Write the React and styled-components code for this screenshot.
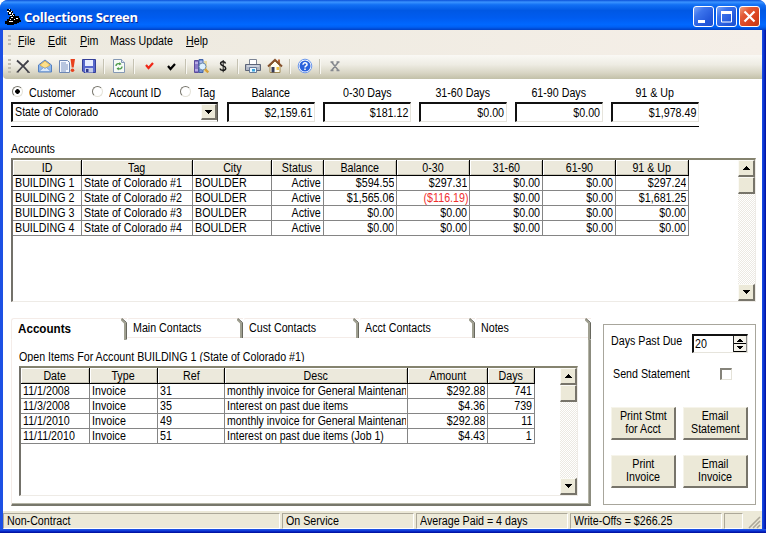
import styled, { createGlobalStyle } from "styled-components";

const GlobalStyle = createGlobalStyle`
  * {
    box-sizing: border-box;
  }
  body {
    margin: 0;
    background: #fff;
    overflow: hidden;
  }
`;

const Window = styled.div`
  width: 766px;
  height: 533px;
  display: flex;
  flex-direction: column;
  overflow: hidden;
  border-radius: 8px 8px 0 0;
  background: linear-gradient(180deg, #1c50e4 0 530px, #0a2fd0 531px, #000c96 533px);
  font-family: "Liberation Sans", Arial, sans-serif;
  font-size: 12px;
  line-height: 14px;
  color: #000;
`;

const TitleBar = styled.div`
  height: 30px;
  flex: none;
  display: flex;
  align-items: center;
  padding: 3px 6px 0 5px;
  background: linear-gradient(
    180deg,
    #0a50d8 0%,
    #3a93ff 7%,
    #1270f4 16%,
    #0058e4 35%,
    #005cf0 60%,
    #0068ff 82%,
    #0060f4 90%,
    #0040c4 100%
  );
`;

const Title = styled.div`
  flex: 1;
  margin-left: 3px;
  font-family: "Open Sans", "Noto Sans", sans-serif;
  font-weight: 700;
  font-size: 13px;
  line-height: 18px;
  letter-spacing: -0.25px;
  color: #fff;
  text-shadow: 1px 1px 0 #0a2a9c;
`;

const Controls = styled.div`
  display: flex;
  gap: 2px;
`;

const ControlButton = styled.div`
  width: 21px;
  height: 21px;
  border: 1px solid #fff;
  border-radius: 3px;
  background: ${(p) =>
    p.$close
      ? "linear-gradient(135deg, #f0a080 0%, #e35a35 30%, #d8401c 70%, #c03a18 100%)"
      : "linear-gradient(135deg, #7ea6f8 0%, #3c74ec 30%, #2459dc 70%, #1c50d0 100%)"};
  svg {
    display: block;
  }
`;

const Frame = styled.div`
  flex: 1;
  display: flex;
  min-height: 0;
  margin-bottom: 4px;
  background: linear-gradient(90deg, #1c50e4 762px, #1040dc 763px, #0010a0 766px);
`;

const Body = styled.div`
  flex: 1;
  margin: 0 4px 0 3px;
  display: flex;
  flex-direction: column;
  background: #fff;
  min-height: 0;
`;

const MenuBar = styled.div`
  height: 25px;
  flex: none;
  display: flex;
  align-items: center;
  padding: 0 0 3px 5px;
  background: linear-gradient(90deg, #ece9de, #f5efe8);
`;

const MenuItem = styled.div`
  width: ${(p) => p.$w}px;
  white-space: nowrap;
`;

const Grip = styled.div`
  width: 3px;
  height: ${(p) => p.$h}px;
  margin-right: ${(p) => p.$gap}px;
  background: repeating-linear-gradient(180deg, #c0bdb0 0 2px, transparent 2px 4px);
`;

const ToolBar = styled.div`
  height: 24px;
  flex: none;
  display: flex;
  align-items: center;
  padding: 0 0 2px 5px;
  border-radius: 4px 0 0 4px;
  background: linear-gradient(180deg, #faf9f5 0%, #eeece3 40%, #d8d5c4 75%, #c2c0a8 100%);
  svg {
    display: block;
    margin-right: 6px;
  }
`;

const Separator = styled.div`
  width: 2px;
  height: 15px;
  margin: 0 6px 0 0;
  background: #c5c2b2;
  border-right: 1px solid #f8f7f2;
`;

/* the narrow dialog face: 12px letters pulled in sideways */
const Text = styled.span`
  display: inline-block;
  flex: none;
  white-space: pre;
  transform: scaleX(${(p) => p.$scale || 0.89});
  transform-origin: ${(p) => p.$origin || "left"} center;
  font-weight: ${(p) => (p.$bold ? 700 : 400)};
  color: ${(p) => p.$color || "inherit"};
  &::first-letter {
    text-decoration: ${(p) => (p.$underline ? "underline" : "none")};
  }
`;

const Content = styled.div`
  flex: 1;
  padding-left: 8px;
  display: flex;
  flex-direction: column;
  min-height: 0;
`;

const Summary = styled.div`
  width: 688px;
  height: 48px;
  flex: none;
  display: flex;
  gap: 8px;
  border-bottom: 1px solid #000;
`;

const Field = styled.div`
  width: ${(p) => p.$w || 88}px;
  margin-right: ${(p) => p.$mr || 0}px;
`;

const FieldLabel = styled.div`
  height: 23px;
  display: flex;
  align-items: center;
  justify-content: center;
  padding-top: 5px;
`;

const RadioRow = styled.div`
  height: 23px;
  display: flex;
  align-items: center;
  padding-top: 5px;
`;

const Radio = styled.div`
  width: 11px;
  height: 11px;
  margin: -3px ${(p) => p.$gap}px 0 1px;
  border-radius: 50%;
  border: 1px solid;
  border-color: #77756c #e4e2d8 #e4e2d8 #77756c;
  background: ${(p) =>
    p.$on ? "radial-gradient(circle, #000 0 2px, #fff 2.6px)" : "#fff"};
`;

const RadioLabel = styled.div`
  width: ${(p) => p.$w}px;
`;

const Sunken = styled.div`
  height: 20px;
  display: flex;
  align-items: center;
  justify-content: ${(p) => (p.$left ? "flex-start" : "flex-end")};
  padding: ${(p) => (p.$left ? "0 0 1px 2px" : "1px 2px 0 0")};
  border-style: solid;
  border-width: 2px 1px 1px 2px;
  border-color: #111 #e6e4dc #e6e4dc #111;
  background: #fff;
`;

const Combo = styled(Sunken)`
  border-right-color: #55534c;
`;

const Spacer = styled.div`
  flex: 1;
  min-width: 0;
`;

const ArrowButton = styled.div`
  width: ${(p) => p.$w || 17}px;
  height: ${(p) => p.$h || 17}px;
  flex: none;
  display: flex;
  align-items: center;
  justify-content: center;
  background: #ece9d8;
  border-style: solid;
  border-width: 1px 2px 2px 1px;
  border-color: #fbfaf5 #77746a #77746a #fbfaf5;
`;

const SectionLabel = styled.div`
  height: 31px;
  flex: none;
  padding-top: 15px;
`;

const GridBox = styled.div`
  width: ${(p) => p.$w}px;
  height: ${(p) => p.$h}px;
  flex: none;
  display: flex;
  justify-content: space-between;
  border-style: solid;
  border-width: 2px 1px 1px 2px;
  border-color: #85836f #eeebe6 #eeebe6 #73716a;
  background: #fff;
`;

const Rows = styled.div`
  display: flex;
  flex-direction: column;
`;

const Row = styled.div`
  display: flex;
`;

const HeadCell = styled.div`
  width: ${(p) => p.$w}px;
  height: 16px;
  display: flex;
  align-items: center;
  justify-content: center;
  padding-top: 1px;
  background: #ece9dc;
  border-right: 1px solid #000;
  border-bottom: 1px solid #000;
  box-shadow: inset 1px 1px 0 #fff, inset -1px -1px 0 #c8c5b6;
`;

const Cell = styled.div`
  width: ${(p) => p.$w}px;
  height: 15px;
  display: flex;
  align-items: center;
  justify-content: ${(p) => (p.$right ? "flex-end" : "flex-start")};
  padding: 0 ${(p) => p.$pr}px 0 2px;
  overflow: clip;
  overflow-clip-margin: content-box;
  border-right: 1px solid #858585;
  border-bottom: 1px solid #858585;
`;

const ScrollBar = styled.div`
  width: 17px;
  display: flex;
  flex-direction: column;
  background: repeating-conic-gradient(#ece9e2 0 25%, #fff 0 50%) 0 0 / 2px 2px;
`;

const Lower = styled.div`
  display: flex;
  margin-top: 16px;
  height: 188px;
`;

const TabPanel = styled.div`
  width: 580px;
  margin-right: 12px;
  display: flex;
  flex-direction: column;
`;

const TabStrip = styled.div`
  display: flex;
  height: 22px;
`;

const Tab = styled.div`
  width: 116px;
  height: ${(p) => (p.$active ? 22 : 20)}px;
  flex: none;
  display: flex;
  justify-content: space-between;
  padding-left: ${(p) => (p.$active ? 6 : 5)}px;
  padding-top: ${(p) => (p.$active ? 3 : 2)}px;
  border-top: 1px solid #f4ece8;
  border-left: 1px solid ${(p) => (p.$active ? "#f4ece8" : "transparent")};
  border-bottom: 1px solid ${(p) => (p.$active ? "transparent" : "#f4ece8")};
  border-radius: 3px 0 0 0;
  svg {
    flex: none;
    margin-top: ${(p) => (p.$active ? -4 : -3)}px;
  }
`;

const TabBody = styled.div`
  flex: 1;
  padding-left: 7px;
  border-left: 1px solid #f4ece8;
  border-right: 2px solid #8c8c7f;
  border-bottom: 2px solid #77776b;
  box-shadow: inset -1px -1px 0 #b4b4a6;
`;

const OpenItems = styled.div`
  height: 10px;
  margin: 12px 0 4px 0;
  display: flex;
  align-items: center;
  overflow: hidden;
`;

const Group = styled.div`
  width: 153px;
  height: 181px;
  margin-top: 6px;
  border: 1px solid #a8a69c;
  display: flex;
  flex-direction: column;
  padding: 8px 6px 0 7px;
`;

const OptionRow = styled.div`
  height: ${(p) => p.$h}px;
  display: flex;
  align-items: center;
  justify-content: space-between;
  padding: 0 ${(p) => p.$pr || 1}px 0 ${(p) => p.$pl || 0}px;
`;

const OptionLabel = styled.div`
  padding-bottom: ${(p) => p.$lift}px;
`;

const Spinner = styled(Sunken)`
  width: 56px;
  height: 19px;
  padding: 0 0 0 1px;
`;

const SpinButtons = styled.div`
  width: 14px;
  height: 16px;
  border-left: 1px solid #222;
  border-right: 1px solid #888;
  svg {
    display: block;
  }
`;

const CheckBox = styled.div`
  width: 12px;
  height: 12px;
  margin-right: 1px;
  border-style: solid;
  border-width: 2px 1px 1px 2px;
  border-color: #85837a #e4e2d8 #e4e2d8 #85837a;
`;

const ButtonGrid = styled.div`
  display: grid;
  grid-template-columns: 65px 65px;
  gap: 15px 7px;
  margin-top: 12px;
`;

const PushButton = styled.div`
  height: 33px;
  display: flex;
  flex-direction: column;
  align-items: center;
  padding-top: 2px;
  line-height: 13px;
  background: #ece9d8;
  border-style: solid;
  border-width: 1px 2px 2px 1px;
  border-color: #f6f4ea #77746a #77746a #f6f4ea;
`;

const StatusBar = styled.div`
  height: 18px;
  flex: none;
  display: flex;
  align-items: flex-end;
  gap: 2px;
  background: #ece9d8;
`;

const StatusPanel = styled.div`
  width: ${(p) => p.$w}px;
  height: 16px;
  display: flex;
  align-items: center;
  padding-left: 3px;
  border: 1px solid;
  border-color: #aca899 #fff #fff #aca899;
`;

function Arrow({ up }) {
  return (
    <svg width="7" height="4" viewBox="0 0 7 4" shapeRendering="crispEdges">
      <path d={up ? "M3 0h1v1h1v1h1v1h1v1H0V3h1V2h1V1h1z" : "M0 0h7v1H6v1H5v1H4v1H3V3H2V2H1V1H0z"} />
    </svg>
  );
}

function AppIcon() {
  return (
    <svg width="16" height="16" viewBox="0 0 16 16" shapeRendering="crispEdges">
      <path d="M2 0h4v2h2v3h2v2h4v2h1v2h1v2h-2v1h-2v1H9v1H2v-1H0v-3h2v-2h2V8h1V6H3V3H2z" fill="#000" />
      <path
        d="M4 0h1v1H4zM2 2h2v1H2zM6 2h1v1H6zM4 3h2v2H4zM7 4h1v2H7zM5 6h2v1H5zM8 6h1v1H8zM6 8h2v1H6zM5 10h1v1H5zM9 10h1v1H9zM11 9h2v1h-2zM4 12h4v1H4z"
        fill="#fff"
      />
    </svg>
  );
}

function Icon({ name }) {
  const art = {
    cut: (
      <>
        <path d="M2 2.500l6 5.500L13.500 14M13.500 2.500L8 8 2.500 14" stroke="#404048" strokeWidth="1.800" fill="none" />
        <path d="M1.500 14h2M12.500 14.300h2.500" stroke="#404048" />
      </>
    ),
    mail: (
      <>
        <path d="M1.500 7L8 2l6.500 5v7h-13z" fill="#8fb8ec" stroke="#5580c0" />
        <path d="M3 7l5-4 5 4-5 3.500z" fill="#fde08a" stroke="#e0a83c" strokeWidth=".8" />
        <path d="M2 13.500l4.500-4L8 10.500l1.500-1 4.500 4z" fill="#d8e8fc" stroke="#6a94d0" strokeWidth=".7" />
      </>
    ),
    doc: (
      <>
        <path d="M.5 2.500h8l2 2v10H.5z" fill="#f4f8ff" stroke="#6c86b4" />
        <path d="M2 5h5M2 7h7M2 9h7M2 11h7M2 13h5" stroke="#7a93c0" />
        <path d="M11.500 1H16l-1.300 8.500h-2z" fill="#e8401c" />
        <circle cx="13.500" cy="12.300" r="1.800" fill="#e8401c" />
      </>
    ),
    save: (
      <>
        <path d="M1.500 1.500h13v13H3l-1.500-1.500z" fill="#5868cc" stroke="#343f98" />
        <path d="M4 2h8v6H4z" fill="#e8edff" />
        <path d="M4 10h8v4.500H4z" fill="#c4cce8" />
        <path d="M5 11h2.500v3H5z" fill="#30388c" />
      </>
    ),
    refresh: (
      <>
        <path d="M2.500 1.500h8l3 3v10h-11z" fill="#f6faf6" stroke="#8498b4" />
        <path d="M10.500 1.500v3h3" fill="#dde6f4" stroke="#8498b4" />
        <path d="M5 8c0-2 2-3 4-2M11 8.500c0 2-2 3-4 2" stroke="#4c9a48" strokeWidth="1.400" fill="none" />
        <path d="M8.500 4l2 2.200-2.500 1zM7.500 12.500l-2-2.200 2.500-1z" fill="#4c9a48" />
      </>
    ),
    redCheck: <path d="M5 7l2.500 3 4.500-5" stroke="#f02818" strokeWidth="2.200" fill="none" />,
    blackCheck: <path d="M5 8l2.500 3 4.500-5" stroke="#000" strokeWidth="2.200" fill="none" />,
    find: (
      <>
        <path d="M1.500 2.500h4v12h-4z" fill="#8878c8" stroke="#5c4c9c" />
        <path d="M6 1.500h4v13H6z" fill="#7494d4" stroke="#4464a8" />
        <path d="M2 5h3M2 12h3M6.500 4h3" stroke="#e6e0ff" />
        <path d="M11 3h3v11h-3z" fill="#e8d8a0" />
        <circle cx="9.500" cy="8.500" r="3.500" fill="#dcf0ff" stroke="#6e8cac" />
        <path d="M12 11l3.200 3.500" stroke="#d8a038" strokeWidth="2.400" />
      </>
    ),
    dollar: (
      <>
        <path d="M10.500 5.500C10 3 5.600 3 5.600 5.600 5.600 8.400 10.700 7.400 10.700 10.200 10.700 13 5.500 13 5.200 10.500" stroke="#181818" strokeWidth="1.500" fill="none" />
        <path d="M8.200 2v12.300" stroke="#181818" strokeWidth="1" />
      </>
    ),
    print: (
      <>
        <path d="M4.500 1.500h7v5h-7z" fill="#fff" stroke="#7c8494" />
        <path d="M.5 6.500h15v6H.5z" fill="#b0b6c4" stroke="#5c6478" />
        <path d="M2 8h12" stroke="#e8ecf4" />
        <path d="M4.500 9.500h7v5h-7z" fill="#eef8ff" stroke="#687a98" />
        <path d="M7 11h3v2.500H7z" fill="#38a4dc" />
      </>
    ),
    home: (
      <>
        <path d="M3 8l5-5 5 5v6.500H3z" fill="#fffdf0" stroke="#a08850" />
        <path d="M11 1.500h2v4h-2z" fill="#c06838" />
        <path d="M1 8.500L8 1.800l7 6.700" stroke="#84502c" strokeWidth="1.900" fill="none" />
        <path d="M4.500 9h3v5.500h-3z" fill="#383c58" />
        <path d="M9.500 9h2.500v3H9.500z" fill="#f0c040" />
      </>
    ),
    help: (
      <>
        <circle cx="8" cy="8" r="6.800" fill="#fff" stroke="#6c98ec" />
        <circle cx="8" cy="8" r="5.500" fill="#2c62dc" />
        <path d="M6 6.700c0-2.600 4-2.400 4 0C10 8 8 8 8 9.600M8 10.600V12" stroke="#fff" strokeWidth="1.500" fill="none" />
      </>
    ),
    close: (
      <path
        d="M4.500 4l7 8.500M11.500 4l-7 8.500M3.500 4h3M9.500 4h3M3.500 12.500h3M9.500 12.500h3"
        stroke="#85888e"
        strokeWidth="1.500"
        fill="none"
      />
    ),
  };
  return (
    <svg width="16" height="16" viewBox="0 0 16 16">
      {art[name]}
    </svg>
  );
}

function TabEdge({ h = 20 }) {
  return (
    <svg width="6" height={h} viewBox={`0 0 6 ${h}`}>
      <path d="M0 1l4 4v17" stroke="#a0a091" strokeWidth="2" fill="none" />
      <path d="M1 .5l4.500 4v17" stroke="#68685e" fill="none" />
    </svg>
  );
}

function Scroll() {
  return (
    <ScrollBar>
      <ArrowButton>
        <Arrow up />
      </ArrowButton>
      <ArrowButton />
      <Spacer />
      <ArrowButton>
        <Arrow />
      </ArrowButton>
    </ScrollBar>
  );
}

function DataGrid({ columns, rows, w, h }) {
  return (
    <GridBox $w={w} $h={h}>
      <Rows>
        <Row>
          {columns.map((c) => (
            <HeadCell key={c.name} $w={c.w}>
              <Text $origin="center">{c.name}</Text>
            </HeadCell>
          ))}
        </Row>
        {rows.map((row, i) => (
          <Row key={i}>
            {row.map((value, j) => {
              const { w: width, right, scale } = columns[j];
              const negative = value.startsWith("(");
              return (
                <Cell key={j} $w={width} $right={right} $pr={negative || !right ? 1 : 2}>
                  <Text
                    $origin={right ? "right" : "left"}
                    $scale={scale}
                    $color={negative ? "#f03030" : undefined}
                  >
                    {value}
                  </Text>
                </Cell>
              );
            })}
          </Row>
        ))}
      </Rows>
      <Scroll />
    </GridBox>
  );
}

const accountColumns = [
  { name: "ID", w: 69 },
  { name: "Tag", w: 111 },
  { name: "City", w: 79 },
  { name: "Status", w: 52, right: true },
  { name: "Balance", w: 73, right: true },
  { name: "0-30", w: 73, right: true },
  { name: "31-60", w: 73, right: true },
  { name: "61-90", w: 73, right: true },
  { name: "91 & Up", w: 73, right: true },
];

const accounts = [
  ["BUILDING 1", "State of Colorado #1", "BOULDER", "Active", "$594.55", "$297.31", "$0.00", "$0.00", "$297.24"],
  ["BUILDING 2", "State of Colorado #2", "BOULDER", "Active", "$1,565.06", "($116.19)", "$0.00", "$0.00", "$1,681.25"],
  ["BUILDING 3", "State of Colorado #3", "BOULDER", "Active", "$0.00", "$0.00", "$0.00", "$0.00", "$0.00"],
  ["BUILDING 4", "State of Colorado #4", "BOULDER", "Active", "$0.00", "$0.00", "$0.00", "$0.00", "$0.00"],
];

const itemColumns = [
  { name: "Date", w: 69 },
  { name: "Type", w: 68 },
  { name: "Ref", w: 67 },
  { name: "Desc", w: 183, scale: 0.877 },
  { name: "Amount", w: 80, right: true },
  { name: "Days", w: 47, right: true },
];

const items = [
  ["11/1/2008", "Invoice", "31", "monthly invoice for General Maintenan", "$292.88", "741"],
  ["11/3/2008", "Invoice", "35", "Interest on past due items", "$4.36", "739"],
  ["11/1/2010", "Invoice", "49", "monthly invoice for General Maintenan", "$292.88", "11"],
  ["11/11/2010", "Invoice", "51", "Interest on past due items (Job 1)", "$4.43", "1"],
];

const totals = [
  ["Balance", "$2,159.61"],
  ["0-30 Days", "$181.12"],
  ["31-60 Days", "$0.00"],
  ["61-90 Days", "$0.00"],
  ["91 & Up", "$1,978.49"],
];

const menu = [
  ["File", 30],
  ["Edit", 32],
  ["Pim", 30],
  ["Mass Update", 76],
  ["Help", 40],
];

const tools = [
  "cut", "mail", "doc", "save", "|", "refresh", "|", "redCheck", "blackCheck", "|",
  "find", "dollar", "|", "print", "home", "|", "help", "|", "close",
];

const buttons = [
  ["Print Stmt", "for Acct"],
  ["Email", "Statement"],
  ["Print", "Invoice"],
  ["Email", "Invoice"],
];

const tabs = ["Main Contacts", "Cust Contacts", "Acct Contacts", "Notes"];

function App() {
  return (
    <>
      <GlobalStyle />
      <Window>
        <TitleBar>
          <AppIcon />
          <Title>Collections Screen</Title>
          <Controls>
            <ControlButton>
              <svg width="19" height="19"><path d="M4 13h7v3H4z" fill="#fff" /></svg>
            </ControlButton>
            <ControlButton>
              <svg width="19" height="19">
                <path d="M4.500 5v10h10V5z" stroke="#fff" fill="none" />
                <path d="M4 4h11v3H4z" fill="#fff" />
              </svg>
            </ControlButton>
            <ControlButton $close>
              <svg width="19" height="19"><path d="M4.500 4.500l10 10M14.500 4.500l-10 10" stroke="#fff" strokeWidth="2.200" /></svg>
            </ControlButton>
          </Controls>
        </TitleBar>
        <Frame>
          <Body>
            <MenuBar>
              <Grip $h={12} $gap={7} />
              {menu.map(([name, w]) => (
                <MenuItem key={name} $w={w}>
                  <Text $underline={name !== "Mass Update"}>{name}</Text>
                </MenuItem>
              ))}
            </MenuBar>
            <ToolBar>
              <Grip $h={14} $gap={4} />
              {tools.map((name, i) => (name === "|" ? <Separator key={i} /> : <Icon key={i} name={name} />))}
            </ToolBar>
            <Content>
              <Summary>
                <Field $w={207} $mr={1}>
                  <RadioRow>
                    <Radio $on $gap={6} />
                    <RadioLabel $w={62}><Text>Customer</Text></RadioLabel>
                    <Radio $gap={6} />
                    <RadioLabel $w={70}><Text>Account ID</Text></RadioLabel>
                    <Radio $gap={7} />
                    <Text>Tag</Text>
                  </RadioRow>
                  <Combo $left>
                    <Text>State of Colorado</Text>
                    <Spacer />
                    <ArrowButton $w={16} $h={16}><Arrow /></ArrowButton>
                  </Combo>
                </Field>
                {totals.map(([name, value]) => (
                  <Field key={name}>
                    <FieldLabel><Text $origin="center">{name}</Text></FieldLabel>
                    <Sunken><Text $origin="right">{value}</Text></Sunken>
                  </Field>
                ))}
              </Summary>
              <SectionLabel><Text>Accounts</Text></SectionLabel>
              <DataGrid columns={accountColumns} rows={accounts} w={745} h={144} />
              <Lower>
                <TabPanel>
                  <TabStrip>
                    <Tab $active>
                      <Text $bold $scale={0.97}>Accounts</Text>
                      <TabEdge h={22} />
                    </Tab>
                    {tabs.map((name, i) => (
                      <Tab key={name}>
                        <Text>{name}</Text>
                        <TabEdge h={i === tabs.length - 1 ? 22 : 20} />
                      </Tab>
                    ))}
                  </TabStrip>
                  <TabBody>
                    <OpenItems>
                      <Text>Open Items For Account BUILDING 1 (State of Colorado #1)</Text>
                    </OpenItems>
                    <DataGrid columns={itemColumns} rows={items} w={559} h={130} />
                  </TabBody>
                </TabPanel>
                <Group>
                  <OptionRow $h={20}>
                    <OptionLabel $lift={4}><Text>Days Past Due</Text></OptionLabel>
                    <Spinner $left>
                      <Text>20</Text>
                      <Spacer />
                      <SpinButtons>
                        <svg width="12" height="16" viewBox="0 0 12 16" shapeRendering="crispEdges">
                          <path d="M0 0h12v16H0z" fill="#f4f2ea" />
                          <path d="M0 7h12v1H0zM0 15h12v1H0zM5 3h2v1h1v1h1v1H3V5h1V4h1zM3 10h6v1H8v1H7v1H5v-1H4v-1H3z" />
                        </svg>
                      </SpinButtons>
                    </Spinner>
                  </OptionRow>
                  <OptionRow $h={42} $pr={16} $pl={2}>
                    <Text>Send Statement</Text>
                    <CheckBox />
                  </OptionRow>
                  <ButtonGrid>
                    {buttons.map(([a, b], i) => (
                      <PushButton key={i}>
                        <Text $origin="center">{a}</Text>
                        <Text $origin="center">{b}</Text>
                      </PushButton>
                    ))}
                  </ButtonGrid>
                </Group>
              </Lower>
            </Content>
            <StatusBar>
              <StatusPanel $w={277}><Text>Non-Contract</Text></StatusPanel>
              <StatusPanel $w={132}><Text>On Service</Text></StatusPanel>
              <StatusPanel $w={152}><Text>Average Paid = 4 days</Text></StatusPanel>
              <StatusPanel $w={152}><Text>Write-Offs = $266.25</Text></StatusPanel>
              <StatusPanel $w={19} />
              <Spacer />
              <svg width="14" height="14" viewBox="2 0 14 14">
                <path d="M3 13L14 2M7 13l7-7M11 13l3-3" stroke="#aca899" strokeWidth="1.600" />
              </svg>
            </StatusBar>
          </Body>
        </Frame>
      </Window>
    </>
  );
}

export default App;
